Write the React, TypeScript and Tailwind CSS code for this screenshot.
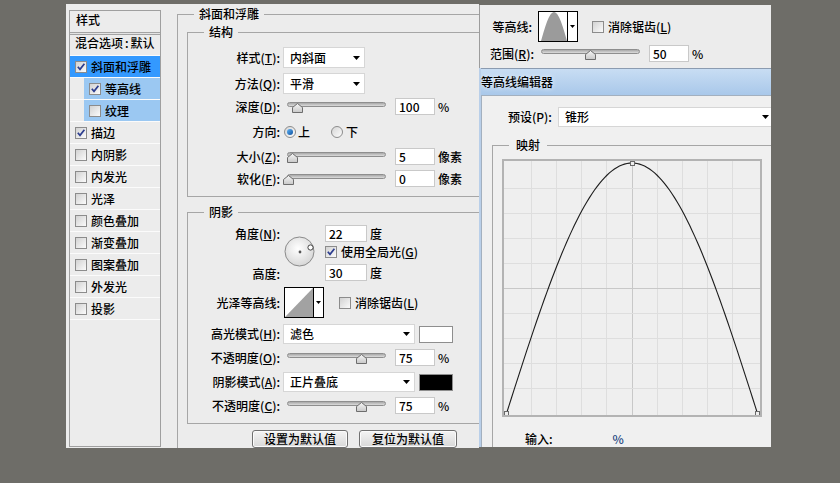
import React from "react";

const U = ({ children }: { children: React.ReactNode }) => (
  <span className="underline underline-offset-[1px]">{children}</span>
);

function Check({ checked = false }: { checked?: boolean }) {
  return (
    <span className="inline-flex w-[12px] h-[12px] shrink-0 items-center justify-center border border-[#8c8c8c] bg-linear-to-br from-[#d2d2d2] to-[#fbfbfb]">
      {checked && (
        <svg width="10" height="10" viewBox="0 0 10 10">
          <path d="M1.8 4.8 L4 7.4 L8.4 1.8" fill="none" stroke="#2c3d8f" strokeWidth="1.7" />
        </svg>
      )}
    </span>
  );
}

function Radio({ checked = false }: { checked?: boolean }) {
  return (
    <span className="inline-flex w-[12px] h-[12px] shrink-0 items-center justify-center rounded-full border border-[#8c8c8c] bg-linear-to-br from-[#d6d6d6] to-[#fcfcfc]">
      {checked && <span className="w-[6px] h-[6px] rounded-full bg-linear-to-br from-[#62b6f7] to-[#0a4f9e]" />}
    </span>
  );
}

function Slider({ pos }: { pos: number }) {
  return (
    <div className="relative w-[99px] h-[17px] shrink-0">
      <div className="absolute left-0 right-0 top-[4px] h-[5px] rounded-full border border-[#8e8e8e] bg-linear-to-b from-[#a8a8a8] to-[#dcdcdc]" />
      <svg className="absolute top-[5px]" style={{ left: pos - 5.5 }} width="11" height="10" viewBox="0 0 11 10">
        <defs>
          <linearGradient id="thumbg" x1="0" y1="0" x2="0" y2="1">
            <stop offset="0" stopColor="#f6f6f6" />
            <stop offset="1" stopColor="#c8c8c8" />
          </linearGradient>
        </defs>
        <path d="M0.5 9.5 V4.5 L5.5 0.5 L10.5 4.5 V9.5 Z" fill="url(#thumbg)" stroke="#6d6d6d" />
      </svg>
    </div>
  );
}

const Inp = ({ v, cls }: { v: string; cls: string }) => (
  <div className={`${cls} h-[17px] shrink-0 bg-white border border-[#c9c9c9] pl-[3px] leading-[15px]`}>{v}</div>
);

const Arrow = () => (
  <svg width="7" height="4" viewBox="0 0 7 4" className="shrink-0">
    <path d="M0 0 H7 L3.5 4 Z" fill="#000" />
  </svg>
);

const Sel = ({ t, cls }: { t: string; cls: string }) => (
  <div className={`${cls} shrink-0 bg-white border border-[#d6d6d6] flex items-center justify-between pl-[6px] pr-[4px]`}>
    <span>{t}</span>
    <Arrow />
  </div>
);

const Lbl = ({ children }: { children: React.ReactNode }) => (
  <div className="w-[92px] shrink-0 text-right">{children}</div>
);

const SmallArrow = () => (
  <svg width="5" height="3" viewBox="0 0 5 3">
    <path d="M0 0 H5 L2.5 3 Z" fill="#000" />
  </svg>
);

function bellPath() {
  const pts: string[] = [];
  for (let i = 0; i <= 30; i++) {
    const t = i / 30;
    const x = 2 + 26 * t;
    const y = 29 - 29 * Math.sin(Math.PI * t);
    pts.push(`L${x.toFixed(2)},${y.toFixed(2)}`);
  }
  return `M2,29 ${pts.join(" ")} L28,29 Z`;
}

function ContourThumb({ bell, cls }: { bell: boolean; cls: string }) {
  return (
    <div className={`${cls} w-[40px] h-[31px] shrink-0 border border-black bg-white flex`}>
      <svg width="28" height="29" viewBox="0 0 28 29" className="block shrink-0">
        {bell ? <path d={bellPath()} fill="#9b9b9b" /> : <path d="M0,29 L28,0 L28,29 Z" fill="#a2a2a2" />}
      </svg>
      <div className="w-[10px] h-full border-l border-black flex items-center justify-center">
        <SmallArrow />
      </div>
    </div>
  );
}

function Dial() {
  return (
    <svg width="31" height="31" viewBox="0 0 31 31" className="block">
      <defs>
        <radialGradient id="dialg" cx="0.45" cy="0.4" r="0.65">
          <stop offset="0" stopColor="#ffffff" />
          <stop offset="1" stopColor="#d4d4d4" />
        </radialGradient>
      </defs>
      <circle cx="15.5" cy="15.5" r="14.5" fill="url(#dialg)" stroke="#8a8a8a" />
      <circle cx="16" cy="16" r="1.4" fill="#555" />
      <circle cx="26.5" cy="11.5" r="2.6" fill="#fff" stroke="#333" strokeWidth="0.9" />
    </svg>
  );
}

function Graph() {
  const vx = [27.5, 52.5, 77.5, 102.5, 128.5, 153.5, 178.5, 203.5, 228.5];
  const hy = [27.5, 52.5, 77.5, 102.5, 127.5, 152.5, 177.5, 202.5, 227.5];
  const pts = Array.from({ length: 101 }, (_, i) => {
    const t = i / 100;
    const x = 2.5 + 251 * t;
    const y = 252.5 - 250.5 * Math.sin(Math.PI * t);
    return `${x.toFixed(2)},${y.toFixed(2)}`;
  }).join(" ");
  return (
    <svg width="256" height="254" viewBox="0 0 256 254" className="block">
      {vx.map((x, i) => (
        <line key={"v" + i} x1={x} y1={0} x2={x} y2={254} stroke={i === 4 ? "#c8c8c8" : "#dedede"} strokeWidth={1} />
      ))}
      {hy.map((y, i) => (
        <line key={"h" + i} x1={0} y1={y} x2={256} y2={y} stroke={i === 4 ? "#c8c8c8" : "#dedede"} strokeWidth={1} />
      ))}
      <polyline points={pts} fill="none" stroke="#1c1c1c" strokeWidth={1.1} />
      <rect x={0.5} y={250.5} width={4} height={4} fill="#eeeeee" stroke="#6a6a6a" />
      <rect x={126.5} y={0.5} width={4} height={4} fill="#eeeeee" stroke="#6a6a6a" />
      <rect x={251.5} y={250.5} width={4} height={4} fill="#eeeeee" stroke="#6a6a6a" />
    </svg>
  );
}

const listRows: { t: string; c?: boolean; sel?: boolean; sub?: boolean }[] = [
  { t: "斜面和浮雕", c: true, sel: true },
  { t: "等高线", c: true, sub: true },
  { t: "纹理", sub: true },
  { t: "描边", c: true },
  { t: "内阴影" },
  { t: "内发光" },
  { t: "光泽" },
  { t: "颜色叠加" },
  { t: "渐变叠加" },
  { t: "图案叠加" },
  { t: "外发光" },
  { t: "投影" },
];

function StyleList() {
  return (
    <div className="ml-[3px] mt-[6px] w-[92px] h-[437px] shrink-0 border border-[#9f9f9f] bg-[#ececec] flex flex-col">
      <div className="h-[21px] pl-[6px] pt-[1px]">样式</div>
      <div className="h-[3px] border-y border-[#a3a3a3] bg-[#e4e4e4]" />
      <div className="h-[21px] pl-[5px] border-b border-[#fbfbfb] whitespace-nowrap">
        混合选项<span className="px-[2px]">:</span>默认
      </div>
      {listRows.map((r) =>
        r.sub ? (
          <div key={r.t} className="h-[22px] border-b border-[#fbfbfb] pl-[14px] flex">
            <div className="flex-1 bg-[#9bc8f2] flex items-center pl-[5px]">
              <Check checked={!!r.c} />
              <span className="ml-[4px]">{r.t}</span>
            </div>
          </div>
        ) : (
          <div
            key={r.t}
            className={`h-[22px] border-b border-[#fbfbfb] flex items-center pl-[5px] ${r.sel ? "bg-[#3399ff]" : ""}`}
          >
            <Check checked={!!r.c} />
            <span className="ml-[4px]">{r.t}</span>
          </div>
        )
      )}
    </div>
  );
}

function Middle() {
  return (
    <div className="ml-[16px] mt-[2px] shrink-0">
      <fieldset className="w-[380px] h-[470px] border border-[#a6a6a6]">
        <legend className="ml-[16px] px-[5px] leading-[16px]">斜面和浮雕</legend>

        <fieldset className="ml-[9px] mt-[2px] w-[345px] border border-[#a6a6a6] pb-[9px]">
          <legend className="ml-[16px] px-[5px] leading-[16px]">结构</legend>
          <div className="mt-[7px] h-[21px] flex items-center">
            <Lbl>
              样式(<U>T</U>):
            </Lbl>
            <Sel t="内斜面" cls="ml-[3px] w-[82px] h-[21px]" />
          </div>
          <div className="mt-[5px] h-[21px] flex items-center">
            <Lbl>
              方法(<U>Q</U>):
            </Lbl>
            <Sel t="平滑" cls="ml-[3px] w-[82px] h-[21px]" />
          </div>
          <div className="mt-[4px] h-[17px] flex items-center">
            <Lbl>
              深度(<U>D</U>):
            </Lbl>
            <div className="ml-[7px]">
              <Slider pos={10} />
            </div>
            <Inp v="100" cls="ml-[9px] w-[40px]" />
            <span className="ml-[3px]">%</span>
          </div>
          <div className="mt-[9px] h-[16px] flex items-center">
            <Lbl>方向:</Lbl>
            <span className="ml-[4px] flex">
              <Radio checked />
            </span>
            <span className="ml-[2px]">上</span>
            <span className="ml-[21px] flex">
              <Radio />
            </span>
            <span className="ml-[3px]">下</span>
          </div>
          <div className="mt-[8px] h-[17px] flex items-center">
            <Lbl>
              大小(<U>Z</U>):
            </Lbl>
            <div className="ml-[7px]">
              <Slider pos={5.5} />
            </div>
            <Inp v="5" cls="ml-[9px] w-[40px]" />
            <span className="ml-[3px]">像素</span>
          </div>
          <div className="mt-[5px] h-[17px] flex items-center">
            <Lbl>
              软化(<U>F</U>):
            </Lbl>
            <div className="ml-[7px]">
              <Slider pos={1} />
            </div>
            <Inp v="0" cls="ml-[9px] w-[40px]" />
            <span className="ml-[3px]">像素</span>
          </div>
        </fieldset>

        <fieldset className="ml-[9px] mt-[7px] w-[345px] border border-[#a6a6a6] pb-[9px]">
          <legend className="ml-[16px] px-[5px] leading-[16px]">阴影</legend>
          <div className="mt-[5px] flex items-start">
            <div className="w-[92px] h-[57px] shrink-0 flex flex-col justify-between text-right">
              <div className="h-[17px] leading-[17px]">
                角度(<U>N</U>):
              </div>
              <div className="h-[17px] leading-[17px]">高度:</div>
            </div>
            <div className="ml-[4px] mt-[11px]">
              <Dial />
            </div>
            <div className="ml-[10px] flex flex-col">
              <div className="flex items-center h-[17px]">
                <Inp v="22" cls="w-[42px]" />
                <span className="ml-[3px]">度</span>
              </div>
              <div className="mt-[1px] h-[18px] flex items-center">
                <Check checked />
                <span className="ml-[4px]">
                  使用全局光(<U>G</U>)
                </span>
              </div>
              <div className="mt-[3px] flex items-center h-[17px]">
                <Inp v="30" cls="w-[42px]" />
                <span className="ml-[3px]">度</span>
              </div>
            </div>
          </div>
          <div className="mt-[5px] h-[31px] flex items-center">
            <Lbl>光泽等高线:</Lbl>
            <ContourThumb bell={false} cls="ml-[4px]" />
            <span className="ml-[15px] flex">
              <Check />
            </span>
            <span className="ml-[4px]">
              消除锯齿(<U>L</U>)
            </span>
          </div>
          <div className="mt-[6px] h-[20px] flex items-center">
            <Lbl>
              高光模式(<U>H</U>):
            </Lbl>
            <Sel t="滤色" cls="ml-[3px] w-[132px] h-[20px]" />
            <div className="ml-[4px] w-[34px] h-[17px] bg-white border border-[#8e8e8e]" />
          </div>
          <div className="mt-[5px] h-[17px] flex items-center">
            <Lbl>
              不透明度(<U>O</U>):
            </Lbl>
            <div className="ml-[7px]">
              <Slider pos={74} />
            </div>
            <Inp v="75" cls="ml-[9px] w-[40px]" />
            <span className="ml-[3px]">%</span>
          </div>
          <div className="mt-[6px] h-[20px] flex items-center">
            <Lbl>
              阴影模式(<U>A</U>):
            </Lbl>
            <Sel t="正片叠底" cls="ml-[3px] w-[132px] h-[20px]" />
            <div className="ml-[4px] w-[34px] h-[17px] bg-black border border-[#8e8e8e]" />
          </div>
          <div className="mt-[5px] h-[17px] flex items-center">
            <Lbl>
              不透明度(<U>C</U>):
            </Lbl>
            <div className="ml-[7px]">
              <Slider pos={74} />
            </div>
            <Inp v="75" cls="ml-[9px] w-[40px]" />
            <span className="ml-[3px]">%</span>
          </div>
        </fieldset>

        <div className="mt-[6px] ml-[74px] flex gap-[11px]">
          <div className="w-[96px] h-[18px] rounded-[3px] border border-[#707070] bg-linear-to-b from-[#f4f4f4] to-[#d8d8d8] flex items-center justify-center shadow-[inset_0_0_0_1px_#fbfbfb]">
            设置为默认值
          </div>
          <div className="w-[98px] h-[18px] rounded-[3px] border border-[#707070] bg-linear-to-b from-[#f4f4f4] to-[#d8d8d8] flex items-center justify-center shadow-[inset_0_0_0_1px_#fbfbfb]">
            复位为默认值
          </div>
        </div>
      </fieldset>
    </div>
  );
}

function RightSide() {
  return (
    <div className="w-[292px] mt-[1px] flex flex-col shrink-0">
      <div className="h-[63px] bg-[#ececec] border-l border-[#9c9c9c] pt-[6px]">
        <div className="h-[31px] flex items-center">
          <div className="ml-[10px] w-[42px] text-right shrink-0">等高线:</div>
          <ContourThumb bell cls="ml-[6px]" />
          <span className="ml-[14px] flex">
            <Check />
          </span>
          <span className="ml-[4px]">
            消除锯齿(<U>L</U>)
          </span>
        </div>
        <div className="mt-[3px] h-[17px] flex items-center">
          <div className="ml-[10px] w-[42px] text-right shrink-0 whitespace-nowrap">
            范围(<U>R</U>):
          </div>
          <div className="ml-[9px]">
            <Slider pos={49.5} />
          </div>
          <Inp v="50" cls="ml-[9px] w-[40px]" />
          <span className="ml-[3px]">%</span>
        </div>
      </div>

      <div className="h-[379px] overflow-hidden border-l-2 border-[#b9cfe9] flex flex-col">
        <div className="h-[27px] shrink-0 border-t border-[#8b9bb0] bg-linear-to-b from-[#c8ddf3] to-[#a9c8ea] flex items-center [text-shadow:0_0_5px_#ffffff]">
          等高线编辑器
        </div>
        <div className="flex-1 bg-[#f0f0f0] border-t border-l border-[#a3b0bf] pt-[11px]">
          <div className="h-[20px] pl-[26px] flex items-center">
            <span className="w-[46px] shrink-0 whitespace-nowrap">预设(P):</span>
            <Sel t="锥形" cls="ml-[4px] w-[216px] h-[20px]" />
          </div>
          <fieldset className="ml-[10px] mt-[10px] w-[300px] h-[320px] border border-[#a6a6a6]">
            <legend className="ml-[16px] px-[7px] leading-[16px]">映射</legend>
            <div className="ml-[9px] mt-[6px] w-[260px] h-[258px] border-2 border-[#b3b3b3] bg-[#efefef]">
              <Graph />
            </div>
            <div className="mt-[14px] ml-[32px] flex">
              <span>输入:</span>
              <span className="ml-[60px] text-[#23467f]">%</span>
            </div>
          </fieldset>
        </div>
      </div>
    </div>
  );
}

export default function App() {
  return (
    <div className="w-[840px] h-[483px] overflow-hidden bg-[#6e6d68] text-[12px] leading-[16px] font-medium text-black font-['Noto_Sans_CJK_SC','Noto_Sans_CJK_JP',sans-serif]">
      <div className="flex items-start pl-[66px] pt-[4px]">
        <div className="w-[413px] h-[444px] shrink-0 bg-[#ececec] overflow-hidden flex items-start">
          <StyleList />
          <Middle />
        </div>
        <RightSide />
      </div>
    </div>
  );
}
